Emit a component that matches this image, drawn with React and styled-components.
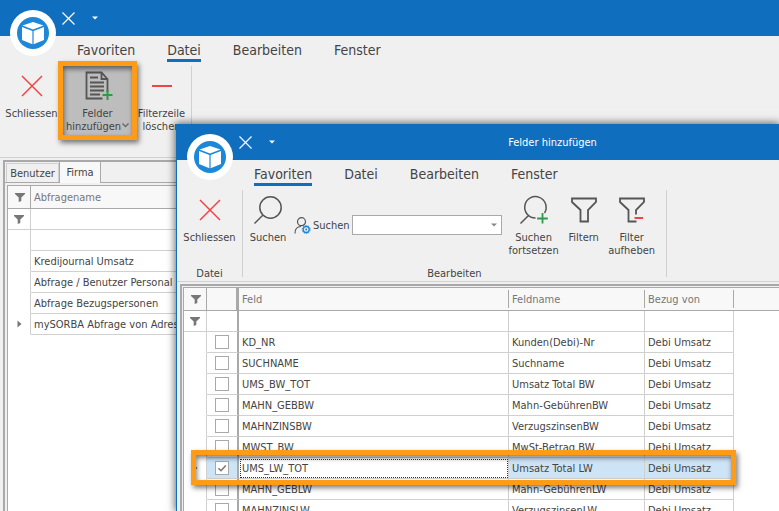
import React from 'react';
import styled, { createGlobalStyle, css } from 'styled-components';

const BLUE = '#106ebe';
const LINE = '#a9a9a9';
const SOFT = '#d0d0d0';
const ORANGE = '#ff9c17';

const GlobalStyle = createGlobalStyle`
  *, *::before, *::after { box-sizing: border-box; }
  body { margin: 0; overflow: hidden; }
  body, button, select, input {
    font-family: "DejaVu Sans Condensed", "DejaVu Sans", Tahoma, sans-serif;
    font-size: 11px;
    color: #444;
  }
  button { border: 0; padding: 0; background: none; }
`;

const Desktop = styled.div`
  position: relative;
  height: 100vh;
  overflow: hidden;
  background: #f0f0f0;
`;

const WindowFrame = styled.section`
  position: relative;
  height: 100%;
  display: flex;
  flex-direction: column;
  background: #f0f0f0;
  ${({ $floating }) => $floating && css`
    position: absolute;
    left: 176px;
    right: 0;
    top: 124px;
    height: auto;
    bottom: 0;
    border-left: 1px solid ${BLUE};
    box-shadow: 0 0 8px 1px rgba(0, 0, 0, 0.6);
  `}
`;

const TitleBar = styled.header`
  flex: none;
  height: 36px;
  display: flex;
  align-items: center;
  padding-left: 60px;
  background: ${BLUE};
  color: #fff;
`;

const TitleButton = styled.button`
  display: flex;
  justify-content: center;
  width: ${({ $width }) => $width}px;
`;

const Title = styled.h1`
  flex: 1;
  margin: 0 0 0 35px;
  font-size: 11px;
  font-weight: 400;
  text-align: center;
`;

const LogoButton = styled.button`
  position: absolute;
  left: 10px;
  top: 10px;
  width: 46px;
  height: 46px;
`;

const TabRow = styled.nav`
  flex: none;
  display: flex;
  gap: 32px;
  height: 26px;
  padding-left: 77px;
`;

const RibbonTab = styled.button`
  height: 26px;
  padding-top: 4px;
  font-size: 14px;
  line-height: 18px;
  border-bottom: 3px solid ${({ $active }) => ($active ? BLUE : 'transparent')};
`;

const RibbonBody = styled.div`
  flex: none;
  display: flex;
  height: 96px;
  padding: 4px 0;
  border-bottom: 1px solid ${SOFT};
`;

const Group = styled.div`
  display: flex;
  flex-direction: column;
  justify-content: space-between;
  border-right: 1px solid ${SOFT};
`;

const GroupItems = styled.div`
  display: flex;
  align-items: flex-start;
  padding-right: ${({ $end }) => $end || 0}px;
`;

const GroupLabel = styled.div`
  height: 10px;
  line-height: 13px;
  text-align: center;
`;

const ToolButton = styled.button`
  position: relative;
  display: flex;
  flex-direction: column;
  align-items: center;
  gap: 5px;
  width: ${({ $width }) => $width}px;
  height: 69px;
  padding-top: 4px;
  line-height: 13px;
  white-space: nowrap;
  background: ${({ $pressed }) => ($pressed ? '#bdbdbd' : 'transparent')};
`;

const DropMark = styled.svg`
  margin-left: 1px;
  vertical-align: 2px;
`;

const CalloutBox = styled.span`
  position: absolute;
  pointer-events: none;
  z-index: 2;
  border: 5px solid ${ORANGE};
  box-shadow: 2px 3px 5px rgba(0, 0, 0, 0.5), inset 1px 3px 5px rgba(0, 0, 0, 0.5);
`;

const ButtonCallout = styled(CalloutBox)`
  inset: -5px;
`;

const RowCallout = styled(CalloutBox)`
  top: -8px;
  bottom: -6px;
  left: 7px;
  width: 545px;
`;

const SearchField = styled.label`
  display: flex;
  align-items: center;
  height: 20px;
  margin: 25px 4px 0 0;
  padding-left: 1px;
  gap: 2px;
`;

const SelectBox = styled.span`
  display: flex;
  align-items: center;
  position: relative;
  svg { position: absolute; right: 5px; pointer-events: none; }
`;

const Select = styled.select`
  appearance: none;
  width: 150px;
  height: 20px;
  border: 1px solid ${LINE};
  border-radius: 0;
  background: #fff;
`;

const Panel = styled.div`
  flex: 1;
  min-height: 0;
  display: flex;
  flex-direction: column;
  overflow: hidden;
  margin: 2px 0 0 3px;
  border: 2px solid ${LINE};
  border-right: 0;
  border-bottom: 0;
  padding: ${({ $tabbed }) => ($tabbed ? '0' : '1px 0 0 1px')};
`;

const PageTabs = styled.div`
  flex: none;
  display: flex;
  align-items: flex-end;
  height: 21px;
  padding-left: 1px;
  border-bottom: 1px solid ${LINE};
`;

const PageTab = styled.button`
  height: ${({ $active }) => ($active ? 22 : 19)}px;
  width: ${({ $active }) => ($active ? 42 : 53)}px;
  margin-bottom: ${({ $active }) => ($active ? -1 : 0)}px;
  border: 1px solid ${({ $active }) => ($active ? LINE : SOFT)};
  border-bottom: 0;
  background: ${({ $active }) => ($active ? '#f8f8f8' : '#f0f0f0')};
`;

const TabPage = styled.div`
  flex: 1;
  min-height: 0;
  padding: 2px 0 0 2px;
`;

const GridHost = styled.div`
  flex: 1;
  height: 100%;
  min-height: 0;
  overflow: hidden;
  border: 1px solid ${LINE};
  border-right: 0;
  border-bottom: 0;
  background: #fff;
`;

const Table = styled.table`
  width: 100%;
  table-layout: fixed;
  border-collapse: separate;
  border-spacing: 0;
`;

const Column = styled.col`
  width: ${({ $width }) => ($width ? `${$width}px` : 'auto')};
`;

const HeadCell = styled.th`
  height: 23px;
  padding: 0 3px;
  text-align: left;
  font-weight: 400;
  color: #777;
  background:
    linear-gradient(${LINE}, ${LINE}) right ${({ $full }) => ($full ? '0 / 1px 100%' : '2px / 1px 18px')} no-repeat,
    #f8f8f8;
  border-bottom: 1px solid ${LINE};
  ${({ $fixed }) => $fixed && css`border-right: 2px solid ${LINE};`}
  ${({ $last }) => $last && css`background: #f8f8f8;`}
`;

const Cell = styled.td`
  height: 21px;
  padding: 0 3px;
  white-space: nowrap;
  overflow: hidden;
  border-right: 1px solid ${SOFT};
  border-bottom: 1px solid ${SOFT};
  background: ${({ $selected }) => ($selected ? '#cde4f7' : '#fff')};
  ${({ $fixed }) => $fixed && css`border-right: 2px solid ${LINE};`}
  ${({ $focused }) => $focused && css`
    background: #fff;
    outline: 1px dotted #333;
    outline-offset: -2px;
  `}
`;

const MarkCell = styled(Cell)`
  padding: 0;
  overflow: visible;
  ${({ $filter }) => !$filter && css`border-bottom-color: #fff;`}
  svg { display: block; margin: 0 auto; }
`;

const BlankCell = styled(Cell)`
  border: 0;
`;

const GridRow = styled.tr`
  position: relative;
`;

const HeadIcon = styled(HeadCell)`
  padding: 0;
  svg { display: block; margin: 0 auto; }
`;

const CheckBox = styled.input`
  appearance: none;
  display: block;
  width: 14px;
  height: 14px;
  margin: 0 auto;
  border: 1px solid ${LINE};
  background: #fff;
  &:checked {
    background: #fff url("data:image/svg+xml,%3Csvg xmlns='http://www.w3.org/2000/svg' viewBox='0 0 12 12'%3E%3Cpath d='M2.5 6.2 5 8.7 9.8 3.5' fill='none' stroke='%23777' stroke-width='1.6'/%3E%3C/svg%3E");
  }
`;

function Logo() {
  return (
    <svg width="46" height="46" viewBox="0 0 46 46">
      <circle cx="23" cy="23" r="23" fill="#fff" />
      <circle cx="23" cy="23" r="16" fill="#1e88d8" />
      <path d="M23 12 33.5 15.4 23 19.4 12.5 15.4ZM12 17l10.4 3.9V34.2L12 30ZM34 17 23.6 20.9V34.2L34 30Z" fill="#fff" />
    </svg>
  );
}

function CrossIcon() {
  return (
    <svg width="13" height="13" viewBox="0 0 13 13">
      <path d="M0.500 0.500 12.500 12.500M12.500 0.500 0.500 12.500" stroke="#fff" strokeWidth="1.200" fill="none" />
    </svg>
  );
}

function Caret({ color }) {
  return <svg width="6" height="4" viewBox="0 0 6 4"><path d="M0 0.5H6L3 3.5Z" fill={color} /></svg>;
}

function Funnel() {
  return <svg width="10" height="9" viewBox="0 0 10 9"><path d="M0 0H10V1L6.3 4.5V8L3.7 9V4.5L0 1Z" fill="#777" /></svg>;
}

function RowArrow() {
  return <svg width="5" height="8" viewBox="0 0 5 8"><path d="M0.5 0.5 4.5 4 0.5 7.5Z" fill="#777" /></svg>;
}

const Big = ({ children }) => (
  <svg width="32" height="32" viewBox="0 0 32 32" fill="none" stroke="#555" strokeWidth="1.5">{children}</svg>
);

const CloseIcon = () => <Big><path d="M6 6 26 26M26 6 6 26" stroke="#ee4444" /></Big>;
const MinusIcon = () => <Big><path d="M6 16H26" stroke="#ee4444" strokeWidth="2" /></Big>;
const SearchIcon = () => <Big><circle cx="18.5" cy="13.5" r="10.7" /><path d="M11 21 2.5 29.5" /></Big>;
const SearchNextIcon = () => (
  <Big>
    <path d="M17.5 24A10.7 10.7 0 1 1 26.500 19M11 21 2.5 29.5" />
    <path d="M24.500 19V29.500M19.200 24.500H29.800" stroke="#2f9a48" strokeWidth="1.800" />
  </Big>
);
const FilterIcon = () => <Big><path d="M4 4.500H28V8L20 16V27.500H12.500V16L4 8Z" strokeWidth="1.800" /></Big>;
const FilterOffIcon = () => (
  <Big>
    <path d="M20.500 27.500H12.500V16L4 8V4.500H28V8L20 16V20.500" strokeWidth="1.800" />
    <path d="M18.500 24H27" stroke="#ee4444" strokeWidth="2" />
  </Big>
);
const FieldsIcon = () => (
  <Big>
    <path d="M20.500 28.500H4.500V2.500H19.500L25.500 9V22M19.500 2.500V9H25.500" strokeWidth="1.800" />
    <path d="M8 7.500H16M8 12.500H22M8 16.500H22M8 20.500H22M8 24.500H18" strokeWidth="1.800" />
    <path d="M25.500 20V30M20.500 25H30.500" stroke="#2f9a48" strokeWidth="2" />
  </Big>
);

function PersonIcon() {
  return (
    <svg width="17" height="17" viewBox="0 0 17 17" fill="none" stroke="#555" strokeWidth="1.2">
      <circle cx="7.500" cy="4.700" r="4" />
      <path d="M1 16.500C1 12 3.500 9.500 7 9.500" />
      <circle cx="12.200" cy="12.500" r="3" stroke="#1e88d8" strokeWidth="1.400" />
      <circle cx="12.200" cy="12.500" r="4" stroke="#1e88d8" strokeDasharray="1.200 1.300" strokeWidth="1" />
      <circle cx="12.200" cy="12.500" r="1" fill="#1e88d8" stroke="none" />
    </svg>
  );
}

function AppWindow({ title, active, floating, ribbon, children }) {
  return (
    <WindowFrame $floating={floating}>
      <TitleBar>
        <TitleButton $width={16} aria-label="Schliessen"><CrossIcon /></TitleButton>
        <TitleButton $width={38} aria-label="Menü"><Caret color="#fff" /></TitleButton>
        {title && <Title>{title}</Title>}
      </TitleBar>
      <TabRow>
        {['Favoriten', 'Datei', 'Bearbeiten', 'Fenster'].map((name) => (
          <RibbonTab key={name} $active={name === active}>{name}</RibbonTab>
        ))}
      </TabRow>
      <RibbonBody>{ribbon}</RibbonBody>
      {children}
      <LogoButton aria-label="Anwendung"><Logo /></LogoButton>
    </WindowFrame>
  );
}

const queries = ['', 'Kredijournal Umsatz', 'Abfrage / Benutzer Personal', 'Abfrage Bezugspersonen', 'mySORBA Abfrage von Adressen'];

const fields = [
  ['KD_NR', 'Kunden(Debi)-Nr'],
  ['SUCHNAME', 'Suchname'],
  ['UMS_BW_TOT', 'Umsatz Total BW'],
  ['MAHN_GEBBW', 'Mahn-GebührenBW'],
  ['MAHNZINSBW', 'VerzugszinsenBW'],
  ['MWST_BW', 'MwSt-Betrag BW'],
  ['UMS_LW_TOT', 'Umsatz Total LW'],
  ['MAHN_GEBLW', 'Mahn-GebührenLW'],
  ['MAHNZINSLW', 'VerzugszinsenLW'],
];

function QueryTable() {
  return (
    <Table>
      <colgroup><Column $width={23} /><Column /></colgroup>
      <thead>
        <tr><HeadIcon $full><Funnel /></HeadIcon><HeadCell $last>Abfragename</HeadCell></tr>
      </thead>
      <tbody>
        <GridRow><MarkCell $filter><Funnel /></MarkCell><Cell /></GridRow>
        {queries.map((name, i) => (
          <GridRow key={name}>
            <MarkCell>{i === 4 && <RowArrow />}</MarkCell>
            <Cell>{name}</Cell>
          </GridRow>
        ))}
      </tbody>
    </Table>
  );
}

function FieldTable() {
  return (
    <Table>
      <colgroup>
        <Column $width={23} /><Column $width={32} /><Column $width={270} />
        <Column $width={136} /><Column $width={89} /><Column />
      </colgroup>
      <thead>
        <tr>
          <HeadIcon $full><Funnel /></HeadIcon>
          <HeadCell $full $fixed />
          <HeadCell>Feld</HeadCell>
          <HeadCell>Feldname</HeadCell>
          <HeadCell>Bezug von</HeadCell>
          <HeadCell $last />
        </tr>
      </thead>
      <tbody>
        <GridRow>
          <MarkCell $filter><Funnel /></MarkCell>
          <Cell $fixed /><Cell /><Cell /><Cell /><BlankCell />
        </GridRow>
        {fields.map(([id, name]) => {
          const selected = id === 'UMS_LW_TOT';
          return (
            <GridRow key={id}>
              <MarkCell>{selected && <><RowArrow /><RowCallout /></>}</MarkCell>
              <Cell $fixed $selected={selected}>
                <CheckBox type="checkbox" defaultChecked={selected} aria-label={id} />
              </Cell>
              <Cell $focused={selected}>{id}</Cell>
              <Cell $selected={selected}>{name}</Cell>
              <Cell $selected={selected}>Debi Umsatz</Cell>
              <BlankCell />
            </GridRow>
          );
        })}
      </tbody>
    </Table>
  );
}

const MainRibbon = () => (
  <Group>
    <GroupItems>
      <ToolButton $width={63}><CloseIcon />Schliessen</ToolButton>
      <ToolButton $width={69} $pressed>
        <FieldsIcon />
        <span>
          Felder<br />hinzufügen
          <DropMark width="7" height="5" viewBox="0 0 7 5"><path d="M0.500 0.500 3.500 3.500 6.500 0.500" fill="none" stroke="#666" strokeWidth="1.300" /></DropMark>
        </span>
        <ButtonCallout />
      </ToolButton>
      <ToolButton $width={59}><MinusIcon /><span>Filterzeile<br />löschen</span></ToolButton>
    </GroupItems>
  </Group>
);

const FieldRibbon = () => (
  <>
    <Group>
      <GroupItems><ToolButton $width={65}><CloseIcon />Schliessen</ToolButton></GroupItems>
      <GroupLabel>Datei</GroupLabel>
    </Group>
    <Group>
      <GroupItems $end={8}>
        <ToolButton $width={50}><SearchIcon />Suchen</ToolButton>
        <SearchField>
          <PersonIcon />
          Suchen
          <SelectBox><Select /><Caret color="#888" /></SelectBox>
        </SearchField>
        <ToolButton $width={56}><SearchNextIcon /><span>Suchen<br />fortsetzen</span></ToolButton>
        <ToolButton $width={44}><FilterIcon />Filtern</ToolButton>
        <ToolButton $width={52}><FilterOffIcon /><span>Filter<br />aufheben</span></ToolButton>
      </GroupItems>
      <GroupLabel>Bearbeiten</GroupLabel>
    </Group>
  </>
);

export default function App() {
  return (
    <>
      <GlobalStyle />
      <Desktop>
        <AppWindow active="Datei" ribbon={<MainRibbon />}>
          <Panel $tabbed>
            <PageTabs>
              <PageTab>Benutzer</PageTab>
              <PageTab $active>Firma</PageTab>
            </PageTabs>
            <TabPage><GridHost><QueryTable /></GridHost></TabPage>
          </Panel>
        </AppWindow>
        <AppWindow floating title="Felder hinzufügen" active="Favoriten" ribbon={<FieldRibbon />}>
          <Panel><GridHost><FieldTable /></GridHost></Panel>
        </AppWindow>
      </Desktop>
    </>
  );
}
